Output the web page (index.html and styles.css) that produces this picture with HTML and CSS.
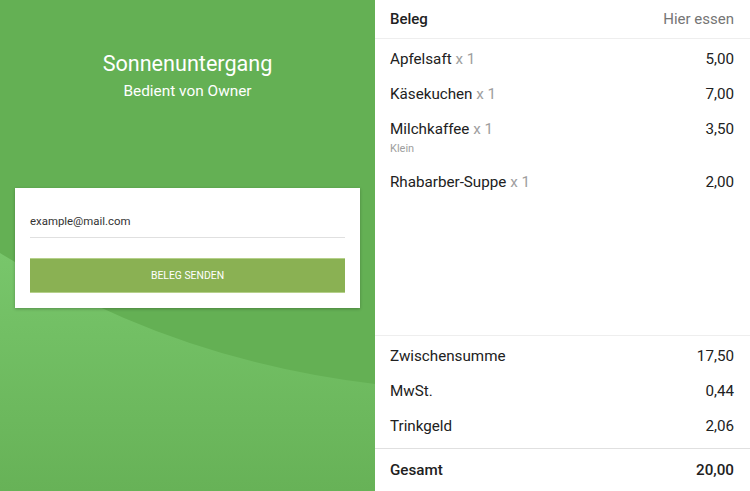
FILE: index.html
```html
<!doctype html>
<html lang="de">
<head>
  <title>Beleg</title>
  <meta charset="utf-8">
  <link rel="stylesheet" href="styles.css">
</head>
<body>

<div class="screen">

  <div class="side">
    <svg class="wave" viewBox="0 0 375 491" preserveAspectRatio="none">
      <defs>
        <linearGradient id="waveFill" x1="0" y1="0" x2="0" y2="1">
          <stop offset="0" stop-color="#78c66b"/>
          <stop offset="1" stop-color="#67b257"/>
        </linearGradient>
      </defs>
      <path d="M0,253 Q170,360 375,384 L375,491 L0,491 Z" fill="url(#waveFill)"/>
    </svg>

    <div class="venue">
      <h1>Sonnenuntergang</h1>
      <p>Bedient von Owner</p>
    </div>

    <form class="card">
      <div class="field">example@mail.com</div>
      <div class="send">BELEG SENDEN</div>
    </form>
  </div>

  <div class="receipt">
    <div class="head">
      <span class="label">Beleg</span>
      <span class="mode">Hier essen</span>
    </div>

    <div class="items">
      <div class="row">
        <span>Apfelsaft <em>x 1</em></span>
        <span>5,00</span>
      </div>
      <div class="row">
        <span>Käsekuchen <em>x 1</em></span>
        <span>7,00</span>
      </div>
      <div class="row has-note">
        <span>Milchkaffee <em>x 1</em><small>Klein</small></span>
        <span>3,50</span>
      </div>
      <div class="row">
        <span>Rhabarber-Suppe <em>x 1</em></span>
        <span>2,00</span>
      </div>
    </div>

    <div class="sums">
      <div class="row"><span>Zwischensumme</span><span>17,50</span></div>
      <div class="row"><span>MwSt.</span><span>0,44</span></div>
      <div class="row"><span>Trinkgeld</span><span>2,06</span></div>
    </div>

    <div class="total">
      <span>Gesamt</span>
      <span>20,00</span>
    </div>
  </div>

</div>

</body>
</html>
```

FILE: styles.css
```css
html {
  height: 100%;
}

body {
  margin: 0;
  padding: 0;
  height: 100%;
  font-family: Roboto, "Liberation Sans", sans-serif;
  color: #212121;
  background: #ffffff;
}

.screen {
  display: flex;
  height: 100%;
}

/* left: venue + email form */

.side {
  position: relative;
  width: 375px;
  flex: none;
  background: #64b054;
  display: flex;
  flex-direction: column;
  align-items: center;
  overflow: hidden;
}

.wave {
  position: absolute;
  left: 0;
  top: 0;
  width: 100%;
  height: 100%;
}

.venue {
  position: relative;
  text-align: center;
  color: #ffffff;
  padding-top: 51px;
  height: 135px;
  box-sizing: border-box;
}

.venue h1 {
  margin: 0;
  font-size: 21.6px;
  line-height: 26px;
  font-weight: 400;
}

.venue p {
  margin: 4px 0 0;
  font-size: 15.4px;
  line-height: 20px;
}

.card {
  position: relative;
  width: 345px;
  box-sizing: border-box;
  margin-top: 53px;
  padding: 15px;
  background: #ffffff;
  box-shadow: 0 1px 3px rgba(0, 0, 0, 0.25);
}

.field {
  height: 35px;
  line-height: 36px;
  font-size: 11.4px;
  color: #333;
  border-bottom: 1px solid #e0e0e0;
  box-sizing: border-box;
}

.send {
  margin-top: 20px;
  height: 35px;
  line-height: 35px;
  background: #8ab153;
  color: #ffffff;
  text-align: center;
  font-size: 10.4px;
  box-shadow: inset 0 -1px 0 #b5d08a, inset 0 1px 0 #b5d08a;
}

/* right: receipt */

.receipt {
  flex: 1;
  display: flex;
  flex-direction: column;
  padding: 0 16px 0 15px;
}

.head {
  display: flex;
  justify-content: space-between;
  height: 39px;
  line-height: 38px;
  font-size: 15px;
  border-bottom: 1px solid #eeeeee;
  margin: 0 -16px 0 -15px;
  padding: 0 16px 0 15px;
  box-sizing: border-box;
}

.head .label {
  font-weight: 500;
}

.head .mode {
  color: #757575;
}

.row {
  display: flex;
  justify-content: space-between;
  font-size: 15.2px;
  line-height: 35px;
}

.row em {
  font-style: normal;
  color: #9e9e9e;
}

.row small {
  display: block;
  font-size: 11px;
  line-height: 12px;
  color: #9e9e9e;
  margin: -4px 0 10px;
}

.items {
  flex: 1;
  padding-top: 3px;
}

.sums {
  border-top: 1px solid #eeeeee;
  border-bottom: 1px solid #e0e0e0;
  margin: 0 -16px 0 -15px;
  padding: 3px 16px 4px 15px;
}

.total {
  display: flex;
  justify-content: space-between;
  height: 42px;
  line-height: 42px;
  font-size: 15.2px;
  font-weight: 500;
}
```
